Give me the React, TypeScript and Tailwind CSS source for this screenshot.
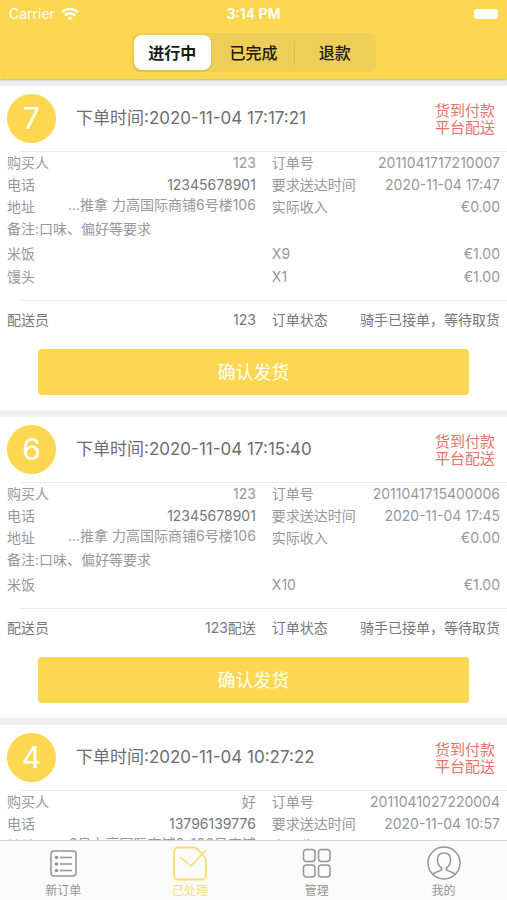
import { useState } from 'react';
import clsx from 'clsx';

type OrderItem = { name: string; count: number; price: string };

type Order = {
  seq: number;
  createdAt: string;
  buyer: string;
  phone: string;
  address: string;
  orderNo: string;
  deliverAt: string;
  income: string;
  remark: string;
  items: OrderItem[];
  courier: string;
  status: string;
};

const ORDERS: Order[] = [
  {
    seq: 7,
    createdAt: '2020-11-04 17:17:21',
    buyer: '123',
    phone: '12345678901',
    address: '...推拿 力高国际商铺6号楼106',
    orderNo: '2011041717210007',
    deliverAt: '2020-11-04 17:47',
    income: '€0.00',
    remark: '口味、偏好等要求',
    items: [
      { name: '米饭', count: 9, price: '€1.00' },
      { name: '馒头', count: 1, price: '€1.00' },
    ],
    courier: '123',
    status: '骑手已接单，等待取货',
  },
  {
    seq: 6,
    createdAt: '2020-11-04 17:15:40',
    buyer: '123',
    phone: '12345678901',
    address: '...推拿 力高国际商铺6号楼106',
    orderNo: '2011041715400006',
    deliverAt: '2020-11-04 17:45',
    income: '€0.00',
    remark: '口味、偏好等要求',
    items: [{ name: '米饭', count: 10, price: '€1.00' }],
    courier: '123配送',
    status: '骑手已接单，等待取货',
  },
  {
    seq: 4,
    createdAt: '2020-11-04 10:27:22',
    buyer: '好',
    phone: '13796139776',
    address: '6号力高国际商铺6-106号店铺',
    orderNo: '2011041027220004',
    deliverAt: '2020-11-04 10:57',
    income: '€0.00',
    remark: '口味、偏好等要求',
    items: [{ name: '米饭', count: 1, price: '€1.00' }],
    courier: '123',
    status: '骑手已接单，等待取货',
  },
];

const SEGMENTS = ['进行中', '已完成', '退款'];

const WifiIcon = () => (
  <svg className="h-[14px] w-[18px]" viewBox="0 0 18 14" fill="none" stroke="white" strokeWidth="2.4">
    <path d="M1 5.2C5.6 .8 12.4 .8 17 5.2" />
    <path d="M4 8.5c2.9-2.7 7.1-2.7 10 0" />
    <path d="M9 13.5 6.2 10.7c1.6-1.4 4-1.4 5.6 0z" fill="white" stroke="none" />
  </svg>
);

const OrdersIcon = () => (
  <svg className="size-9" viewBox="0 0 36 36" fill="none" stroke="currentColor" strokeWidth="1.5">
    <rect x="6" y="6" width="25" height="25" rx="3" />
    <path d="M15 12.500h12M15 19h12M15 25.500h12" />
    <g fill="currentColor" stroke="none">
      <circle cx="11.500" cy="12.500" r="1.800" />
      <circle cx="11.500" cy="19" r="1.800" />
      <circle cx="11.500" cy="25.500" r="1.800" />
    </g>
  </svg>
);

const DoneIcon = () => (
  <svg className="size-9" viewBox="0 0 36 36" fill="none" stroke="currentColor" strokeWidth="1.8" strokeLinecap="round">
    <path d="M29.500 8.500 25 4Q23.500 2.500 21.500 2.500H6a4 4 0 0 0-4 4v24a4 4 0 0 0 4 4h24a4 4 0 0 0 4-4V16q0-2-1.500-3.500l-3-4" />
    <path d="M8.500 12.500l10.500 8.500L33.500 5.500" strokeWidth="1.5" />
  </svg>
);

const ManageIcon = () => (
  <svg className="size-9" viewBox="0 0 36 36" fill="none" stroke="currentColor" strokeWidth="1.5">
    <rect x="4.5" y="4.5" width="11.5" height="12" rx="3" />
    <rect x="19.5" y="4.5" width="11.5" height="12" rx="3" />
    <rect x="4.5" y="20" width="11.5" height="12" rx="3" />
    <rect x="19.5" y="20" width="11.5" height="12" rx="3" />
  </svg>
);

const MineIcon = () => (
  <svg className="size-9" viewBox="0 0 36 36" fill="none" stroke="currentColor" strokeWidth="1.5">
    <circle cx="18" cy="18" r="16" />
    <path d="M7 29.500c1.500-2.200 4-2.800 6.500-3.500 2-.6 2.700-1.300 2.200-3-2.600-1.500-4.200-4.500-4.200-8.500 0-4.500 2.500-6.500 6.500-6.500s6.500 2 6.500 6.500c0 4-1.600 7-4.200 8.500-.5 1.700.2 2.400 2.200 3 2.500.7 5 1.300 6.500 3.500" />
  </svg>
);

const TABS = [
  { label: '新订单', Icon: OrdersIcon },
  { label: '已处理', Icon: DoneIcon },
  { label: '管理', Icon: ManageIcon },
  { label: '我的', Icon: MineIcon },
];

const Field = ({ label, value, className }: { label: string; value: string; className?: string }) => (
  <div className="flex min-w-0 justify-between">
    <dt className="shrink-0">{label}</dt>
    <dd className={clsx('whitespace-nowrap', className)}>{value}</dd>
  </div>
);

const OrderCard = ({ order }: { order: Order }) => (
  <article className="bg-white pb-[15px] text-[#98989b]">
    <header className="flex items-center py-2 pr-3 pl-[7px]">
      <span className="flex size-[49px] shrink-0 items-center justify-center rounded-full bg-[#fdd74f] text-[30px] text-white">
        {order.seq}
      </span>
      <h2 className="ml-5 flex-1 text-[17px] text-[#6e6e6e]">下单时间:{order.createdAt}</h2>
      <p className="text-[15px] leading-[17px] text-[#e8736d]">
        货到付款
        <br />
        平台配送
      </p>
    </header>

    <div className="ml-5 h-px bg-[#ededf0]" />

    <div className="px-[7px] text-[14px] leading-[22px]">
      <dl className="grid grid-cols-[12fr_11fr] gap-x-4">
        <Field label="购买人" value={order.buyer} />
        <Field label="订单号" value={order.orderNo} />
        <Field label="电话" value={order.phone} className="text-[#77777b]" />
        <Field label="要求送达时间" value={order.deliverAt} />
        <Field label="地址" value={order.address} className="leading-[18px]" />
        <Field label="实际收入" value={order.income} />
      </dl>
      <p>备注:{order.remark}</p>
      <ul className="pt-[2px] pb-3 leading-[23px]">
        {order.items.map((item) => (
          <li key={item.name} className="grid grid-cols-[12fr_11fr] gap-x-4">
            <span>{item.name}</span>
            <span className="flex justify-between">
              <span>X{item.count}</span>
              <span>{item.price}</span>
            </span>
          </li>
        ))}
      </ul>
    </div>

    <div className="ml-5 h-px bg-[#ededf0]" />

    <dl className="grid grid-cols-[12fr_11fr] gap-x-4 px-[7px] text-[14px] leading-[38px] text-[#77777b]">
      <Field label="配送员" value={order.courier} />
      <Field label="订单状态" value={order.status} />
    </dl>

    <div className="mt-[10px] px-[38px]">
      <button type="button" className="h-[46px] w-full rounded-sm bg-[#fdd74f] text-[18px] text-white">
        确认发货
      </button>
    </div>
  </article>
);

const App = () => {
  const [segment, setSegment] = useState(0);
  const [tab, setTab] = useState(1);

  return (
    <div className="flex h-screen flex-col bg-[#efeff0] font-['Inter','Noto_Sans_CJK_SC',sans-serif]">
      <header className="z-10 bg-[#fdd74f] pb-[7px] shadow-[0_1px_2px_rgba(0,0,0,0.25)]">
        <div className="grid h-[27px] grid-cols-3 items-center px-[9px] text-[14px] text-white">
          <span className="flex items-center gap-[6px]">
            Carrier
            <WifiIcon />
          </span>
          <span className="text-center font-semibold">3:14 PM</span>
          <span className="flex justify-end">
            <span className="h-[10px] w-6 rounded-[3px] bg-white" />
          </span>
        </div>

        <div className="mx-auto mt-[6px] grid w-[244px] grid-cols-3 rounded-lg bg-[#eecd58]">
          {SEGMENTS.map((name, i) => (
            <div
              key={name}
              className={clsx(
                "relative p-[2px]",
                i > 0 && i - 1 !== segment && i !== segment &&
                  "before:absolute before:top-2 before:left-0 before:h-6 before:w-px before:bg-[#d9bd5a]",
              )}
            >
              <button
                type="button"
                onClick={() => setSegment(i)}
                className={clsx(
                  'h-[35px] w-full rounded-lg text-[16px] text-[#1c1a10]',
                  i === segment ? 'bg-white font-semibold shadow-sm' : 'font-medium',
                )}
              >
                {name}
              </button>
            </div>
          ))}
        </div>
      </header>

      <main className="flex min-h-0 flex-1 flex-col gap-[7px] overflow-y-auto pt-[7px] [scrollbar-width:none]">
        {ORDERS.map((order) => (
          <OrderCard key={order.orderNo} order={order} />
        ))}
      </main>

      <nav className="grid h-[60px] grid-cols-4 border-t border-[#d4d4d4] bg-[#fbfbfb]">
        {TABS.map(({ label, Icon }, i) => (
          <button
            key={label}
            type="button"
            onClick={() => setTab(i)}
            className={clsx(
              'flex flex-col items-center pt-1 text-[12px] leading-[20px]',
              i === tab ? 'text-[#fbdc74]' : 'text-[#949494]',
            )}
          >
            <Icon />
            {label}
          </button>
        ))}
      </nav>
    </div>
  );
};

export default App;
